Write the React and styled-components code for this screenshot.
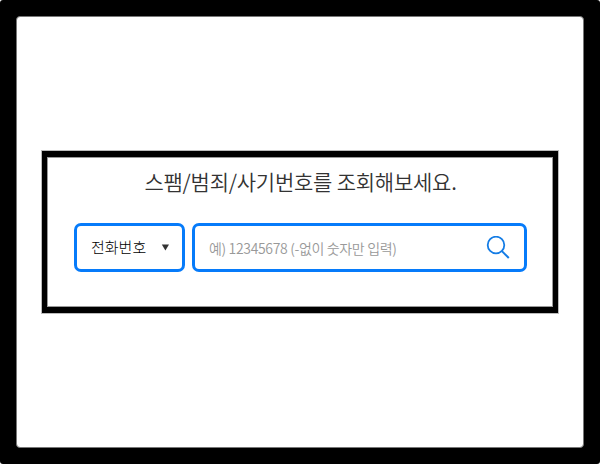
import React, { useState } from "react";
import styled, { createGlobalStyle } from "styled-components";

function App() {
  const [number, setNumber] = useState("");

  return (
    <Frame>
      <GlobalStyle />
      <Screen>
        <SearchPanel>
          <Title>스팸/범죄/사기번호를 조회해보세요.</Title>
          <SearchForm onSubmit={(e) => e.preventDefault()}>
            <TypeSelect type="button">
              전화번호
              <Arrow viewBox="0 0 8 7">
                <path d="M0.8 0.4h7.2L4.4 6.6z" fill="#333" />
              </Arrow>
            </TypeSelect>
            <InputBox>
              <NumberInput
                value={number}
                onChange={(e) => setNumber(e.target.value)}
                placeholder="예) 12345678 (-없이 숫자만 입력)"
              />
              <SearchButton type="submit" aria-label="검색">
                <svg width="24" height="24" viewBox="0 0 24 24" fill="none" stroke="#147ce5">
                  <circle cx="10" cy="9" r="8.3" strokeWidth="1.8" />
                  <path d="M15.9 15.1L22.8 22" strokeWidth="2" />
                </svg>
              </SearchButton>
            </InputBox>
          </SearchForm>
        </SearchPanel>
      </Screen>
    </Frame>
  );
}

export default App;

const GlobalStyle = createGlobalStyle`
  * {
    box-sizing: border-box;
  }

  body {
    margin: 0;
    background: #fff;
    font-family: "Noto Sans CJK KR", sans-serif;
  }
`;

const Frame = styled.div`
  width: 600px;
  height: 464px;
  padding: 16px;
  background: #000;
  border-radius: 3px;
`;

const Screen = styled.div`
  display: flex;
  height: 432px;
  align-items: center;
  justify-content: center;
  background: #fff;
  border: 1px solid #777;
  border-radius: 4px;
`;

const SearchPanel = styled.div`
  width: 516px;
  height: 162px;
  padding: 8px 26px 0 27px;
  border: 6px solid #000;
  border-width: 6px 5px;
  box-shadow: 0 0 0 1px #bbb, inset 0 0 0 1px #999;
`;

const Title = styled.h1`
  margin: 0;
  height: 58px;
  font-size: 21px;
  font-weight: 350;
  line-height: 32px;
  letter-spacing: -0.23px;
  color: #333;
  text-align: center;
  white-space: nowrap;
`;

const SearchForm = styled.form`
  display: flex;
  gap: 7px;
`;

const TypeSelect = styled.button`
  display: flex;
  align-items: center;
  justify-content: space-between;
  width: 111px;
  height: 49px;
  padding: 0 13px 3px 14px;
  background: #fff;
  border: 3px solid #067bfa;
  border-radius: 7px;
  font-family: inherit;
  font-size: 15px;
  font-weight: 300;
  color: #000;
`;

const Arrow = styled.svg`
  width: 8px;
  height: 7px;
  margin-top: 3px;
`;

const InputBox = styled.div`
  display: flex;
  align-items: center;
  width: 335px;
  height: 49px;
  padding: 0 14px;
  background: #fff;
  border: 3px solid #067bfa;
  border-radius: 7px;
`;

const NumberInput = styled.input`
  flex: 1;
  min-width: 0;
  padding: 0;
  border: 0;
  outline: none;
  font-family: inherit;
  font-size: 14px;
  font-weight: 350;
  letter-spacing: -0.34px;
  color: #333;

  &::placeholder {
    color: #999;
  }
`;

const SearchButton = styled.button`
  display: flex;
  padding: 0;
  border: 0;
  background: none;
`;
